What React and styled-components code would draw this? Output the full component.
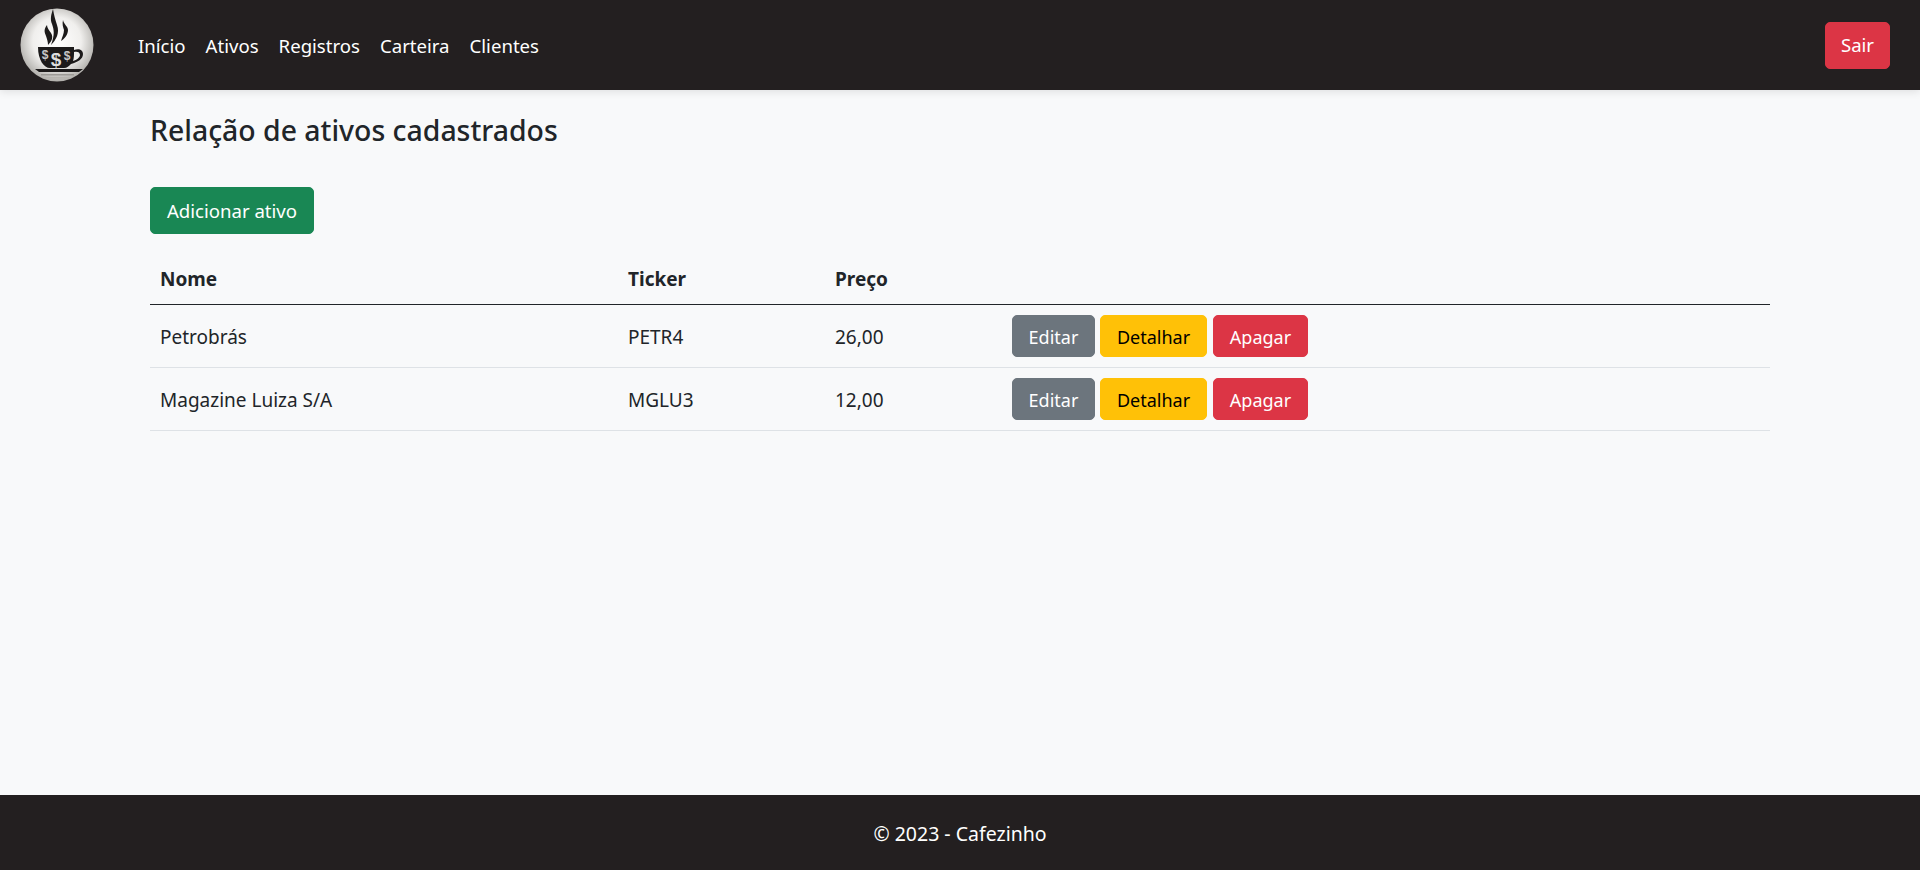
import React from "react";
import styled, { createGlobalStyle } from "styled-components";

const Global = createGlobalStyle`
  html, body { margin: 0; padding: 0; height: 100%; }
  body { background: #f8f9fa; color: #212529; font-family: "Noto Sans", "Open Sans", sans-serif; font-size: 19px; line-height: 30px; }
  #root { min-height: 100vh; }
`;
const Page = styled.div`
  display: flex; flex-direction: column; min-height: 870px;
`;
const Navbar = styled.nav`
  height: 90px; background: #231f20; display: flex; align-items: center;
  padding: 0 30px 0 20px; box-shadow: 0 2px 8px rgba(0,0,0,.1); flex: none; font-size: 18.6px;
`;
const Logo = styled.svg`
  width: 74px; height: 74px; flex: none; margin-right: 44px;
`;
const NavList = styled.div`
  display: flex; gap: 20px; flex: 1; padding-top: 2px;
`;
const NavLink = styled.a`
  color: #fff; text-decoration: none;
`;
const Button = styled.button`
  display: block; border: 1px solid ${p => p.$bg}; background: ${p => p.$bg}; color: ${p => p.$fg || "#fff"};
  font-family: inherit; font-size: ${p => p.$fs || 18.6}px; line-height: 28px; font-weight: 400;
  height: ${p => p.$h || 47}px; min-width: ${p => p.$w || 0}px; padding: ${p => p.$pt || 0}px ${p => p.$px ?? 16}px 0; border-radius: 5px; white-space: nowrap;
`;
const Main = styled.main`
  flex: 1; padding: 0 150px;
`;
const Title = styled.h4`
  margin: 22px 0 39px; font-size: 28.4px; line-height: 36px; font-weight: 500;
`;
const Table = styled.table`
  width: 100%; margin-top: 16px; border-collapse: collapse; table-layout: fixed;
`;
const Th = styled.th`
  width: ${p => p.$w ? p.$w + "px" : "auto"}; text-align: left; padding: 14px 10px 10px; height: 54px; box-sizing: border-box;
  font-weight: 700; border-bottom: 1px solid #212529;
`;
const Td = styled.td`
  padding: 11px 10px 9px; height: 63px; box-sizing: border-box; border-bottom: 1px solid #dee2e6;
`;
const ActionCell = styled(Td)`
  padding: 10px;
`;
const Actions = styled.div`
  display: flex; gap: 5px;
  & > button:last-child { margin-left: 1px; }
`;
const Footer = styled.footer`
  height: 75px; background: #231f20; color: #fff; display: flex; align-items: center; justify-content: center; flex: none; font-size: 19.5px; padding-top: 2px; box-sizing: border-box;
`;

const CupLogo = () => (
  <Logo viewBox="0 0 74 74">
    <defs>
      <radialGradient id="disc" cx="50%" cy="45%" r="55%">
        <stop offset="0%" stopColor="#ffffff" />
        <stop offset="60%" stopColor="#f0efed" />
        <stop offset="100%" stopColor="#b0aeaa" />
      </radialGradient>
    </defs>
    <circle cx="37" cy="37" r="36.5" fill="url(#disc)" />
    <path d="M33 1c-2 6-3 10-1 15 2 6 3 10-1 21 5-5 9-12 6-20-2-6-3-10-4-16z" fill="#1c1a1a" />
    <path d="M27 17c-4 5-2 8-1 11 1 3 2 6 2 9 3-3 6-7 3-12-2-3-4-5-4-8z" fill="#1c1a1a" />
    <path d="M43 12c-1 4 0 7 1 10 0 4-2 7-3 11 3-2 7-6 7-11 0-4-4-5-5-10z" fill="#1c1a1a" />
    <path d="M18 39h36v3c5-2 9 0 9 4 0 5-5 8-12 10-2 2-4 4-7 4H30c-6 0-12-8-12-21z" fill="#1c1a1a" />
    <path d="M54 44c3-1 6 0 6 3 0 2-3 5-7 6 1-3 1-6 1-9z" fill="#eeeeec" />
    <path d="M15 61h48l-4 3H19z" fill="#1c1a1a" />
    <rect x="21" y="66" width="33" height="1.5" fill="#9c9a96" />
    <rect x="25" y="69" width="25" height="1.5" fill="#b5b3ae" />
    <text x="25" y="51" fontSize="12" fontWeight="700" fill="#c8c8c8" textAnchor="middle" fontFamily="Liberation Sans, sans-serif">$</text>
    <text x="36" y="58" fontSize="19" fontWeight="700" fill="#dedede" textAnchor="middle" fontFamily="Liberation Sans, sans-serif">$</text>
    <text x="47" y="52" fontSize="12" fontWeight="700" fill="#c8c8c8" textAnchor="middle" fontFamily="Liberation Sans, sans-serif">$</text>
  </Logo>
);

const rows = [
  ["Petrobrás", "PETR4", "26,00"],
  ["Magazine Luiza S/A", "MGLU3", "12,00"],
];

export default function App() {
  return (
    <Page>
      <Global />
      <Navbar>
        <CupLogo />
        <NavList>
          {["Início", "Ativos", "Registros", "Carteira", "Clientes"].map(l => <NavLink key={l} href="#">{l}</NavLink>)}
        </NavList>
        <Button $bg="#dc3545" $w={65} $px={0}>Sair</Button>
      </Navbar>
      <Main>
        <Title>Relação de ativos cadastrados</Title>
        <Button $bg="#198754" $w={164} $px={0}>Adicionar ativo</Button>
        <Table>
          <thead>
            <tr>
              <Th $w={468}>Nome</Th>
              <Th $w={207}>Ticker</Th>
              <Th $w={177}>Preço</Th>
              <Th />
            </tr>
          </thead>
          <tbody>
            {rows.map(r => (
              <tr key={r[1]}>
                <Td>{r[0]}</Td>
                <Td>{r[1]}</Td>
                <Td>{r[2]}</Td>
                <ActionCell>
                  <Actions>
                    <Button $bg="#6c757d" $h={42} $fs={18} $w={83} $px={0} $pt={2}>Editar</Button>
                    <Button $bg="#ffc107" $fg="#000" $h={42} $fs={18} $w={107} $px={0} $pt={2}>Detalhar</Button>
                    <Button $bg="#dc3545" $h={42} $fs={18} $w={95} $px={0} $pt={2}>Apagar</Button>
                  </Actions>
                </ActionCell>
              </tr>
            ))}
          </tbody>
        </Table>
      </Main>
      <Footer>© 2023 - Cafezinho</Footer>
    </Page>
  );
}
